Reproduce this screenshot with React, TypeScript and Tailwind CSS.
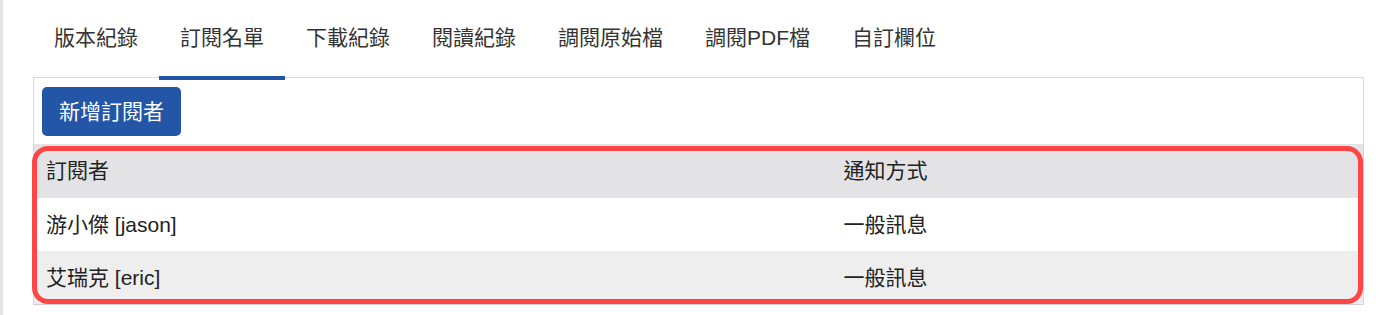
import React from "react";

const tabs = ["版本紀錄", "訂閱名單", "下載紀錄", "閱讀紀錄", "調閱原始檔", "調閱PDF檔", "自訂欄位"];

const subscribers = [
  { name: "游小傑 [jason]", notify: "一般訊息" },
  { name: "艾瑞克 [eric]", notify: "一般訊息" },
];

export default function App() {
  return (
    <div
      className="flex h-[315px] w-[1400px] bg-white text-[#222]"
      style={{ fontFamily: '"Liberation Sans", "Noto Sans CJK TC", sans-serif' }}
    >
      <div className="w-[3px] shrink-0 bg-[#e6e6e6]" />
      <div className="flex-1 pl-[30px] pr-[36px]">
        {/* tabs */}
        <div className="relative z-10 -mb-[3px] flex">
          {tabs.map((tab, i) => (
            <div
              key={tab}
              className={
                "flex h-[80px] items-center border-b-4 px-[21px] text-[21px] text-[#333] " +
                (i === 1 ? "border-[#2456a8]" : "border-transparent")
              }
            >
              {tab}
            </div>
          ))}
        </div>

        {/* panel */}
        <div className="border border-[#d9d9d9] border-b-[#d0d0d0]">
          <div className="px-2 pt-[9px] pb-2">
            <button
              type="button"
              className="h-[49px] rounded-[5px] bg-[#2456a8] px-[17px] text-[21px] text-white"
            >
              新增訂閱者
            </button>
          </div>

          <div className="relative">
            <table className="w-full border-collapse text-[21px]">
              <thead>
                <tr className="h-[54px] bg-[#e3e3e6]">
                  <th className="w-[60%] pl-[12px] text-left font-normal">訂閱者</th>
                  <th className="pl-[12px] text-left font-normal">通知方式</th>
                </tr>
              </thead>
              <tbody>
                {subscribers.map((s, i) => (
                  <tr key={s.name} className={"h-[53px] " + (i % 2 === 1 ? "bg-[#eeeeef]" : "bg-white")}>
                    <td className="pl-[12px]">{s.name}</td>
                    <td className="pl-[12px]">{s.notify}</td>
                  </tr>
                ))}
              </tbody>
            </table>
            <div className="pointer-events-none absolute -left-[2px] top-[2px] right-0 bottom-0 rounded-[16px] border-[5px] border-[#ff4646]" />
          </div>
        </div>
      </div>
    </div>
  );
}
